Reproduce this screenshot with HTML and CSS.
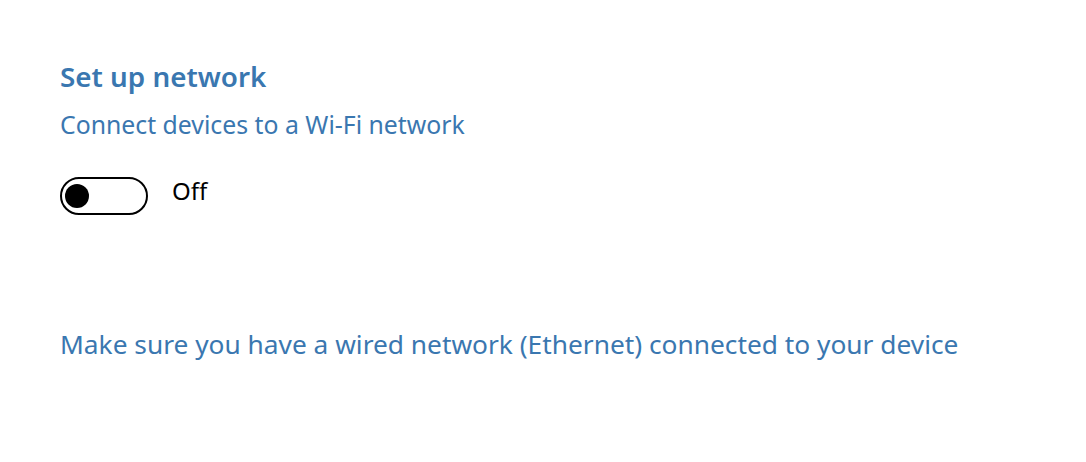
FILE: index.html
```html
<!DOCTYPE html>
<html>
<head>
<meta charset="utf-8">
<link rel="stylesheet" href="styles.css">
</head>
<body>
<main class="page">
  <section class="setup">
    <h1 class="title">Set up network</h1>
    <p class="subtitle">Connect devices to a Wi-Fi network</p>
    <div class="toggle-row">
      <span class="toggle"><span class="knob"></span></span>
      <span class="state">Off</span>
    </div>
  </section>
  <p class="note">Make sure you have a wired network (Ethernet) connected to your device</p>
</main>
</body>
</html>
```

FILE: styles.css
```css
html, body {
  margin: 0;
  padding: 0;
  background: #ffffff;
}
body {
  font-family: "Noto Sans", "Open Sans", sans-serif;
  color: #3a77b0;
}
.page {
  padding: 58px 0 0 60px;
  display: flex;
  flex-direction: column;
}
.setup {
  display: flex;
  flex-direction: column;
}
.title {
  margin: 0;
  font-size: 27.8px;
  font-weight: 600;
  line-height: 36px;
}
.subtitle {
  margin: 14px 0 0;
  font-size: 24.8px;
  line-height: 32px;
}
.toggle-row {
  margin-top: 37px;
  display: flex;
  align-items: flex-start;
  gap: 24px;
}
.toggle {
  box-sizing: border-box;
  width: 88px;
  height: 38px;
  border: 2px solid #000;
  border-radius: 19px;
  display: flex;
  align-items: center;
  padding-left: 3px;
}
.knob {
  width: 24px;
  height: 24px;
  border-radius: 50%;
  background: #000;
}
.state {
  font-size: 24px;
  line-height: 28px;
  color: #000;
}
.note {
  margin: 111px 0 0;
  font-size: 26.3px;
  line-height: 36px;
}
```
